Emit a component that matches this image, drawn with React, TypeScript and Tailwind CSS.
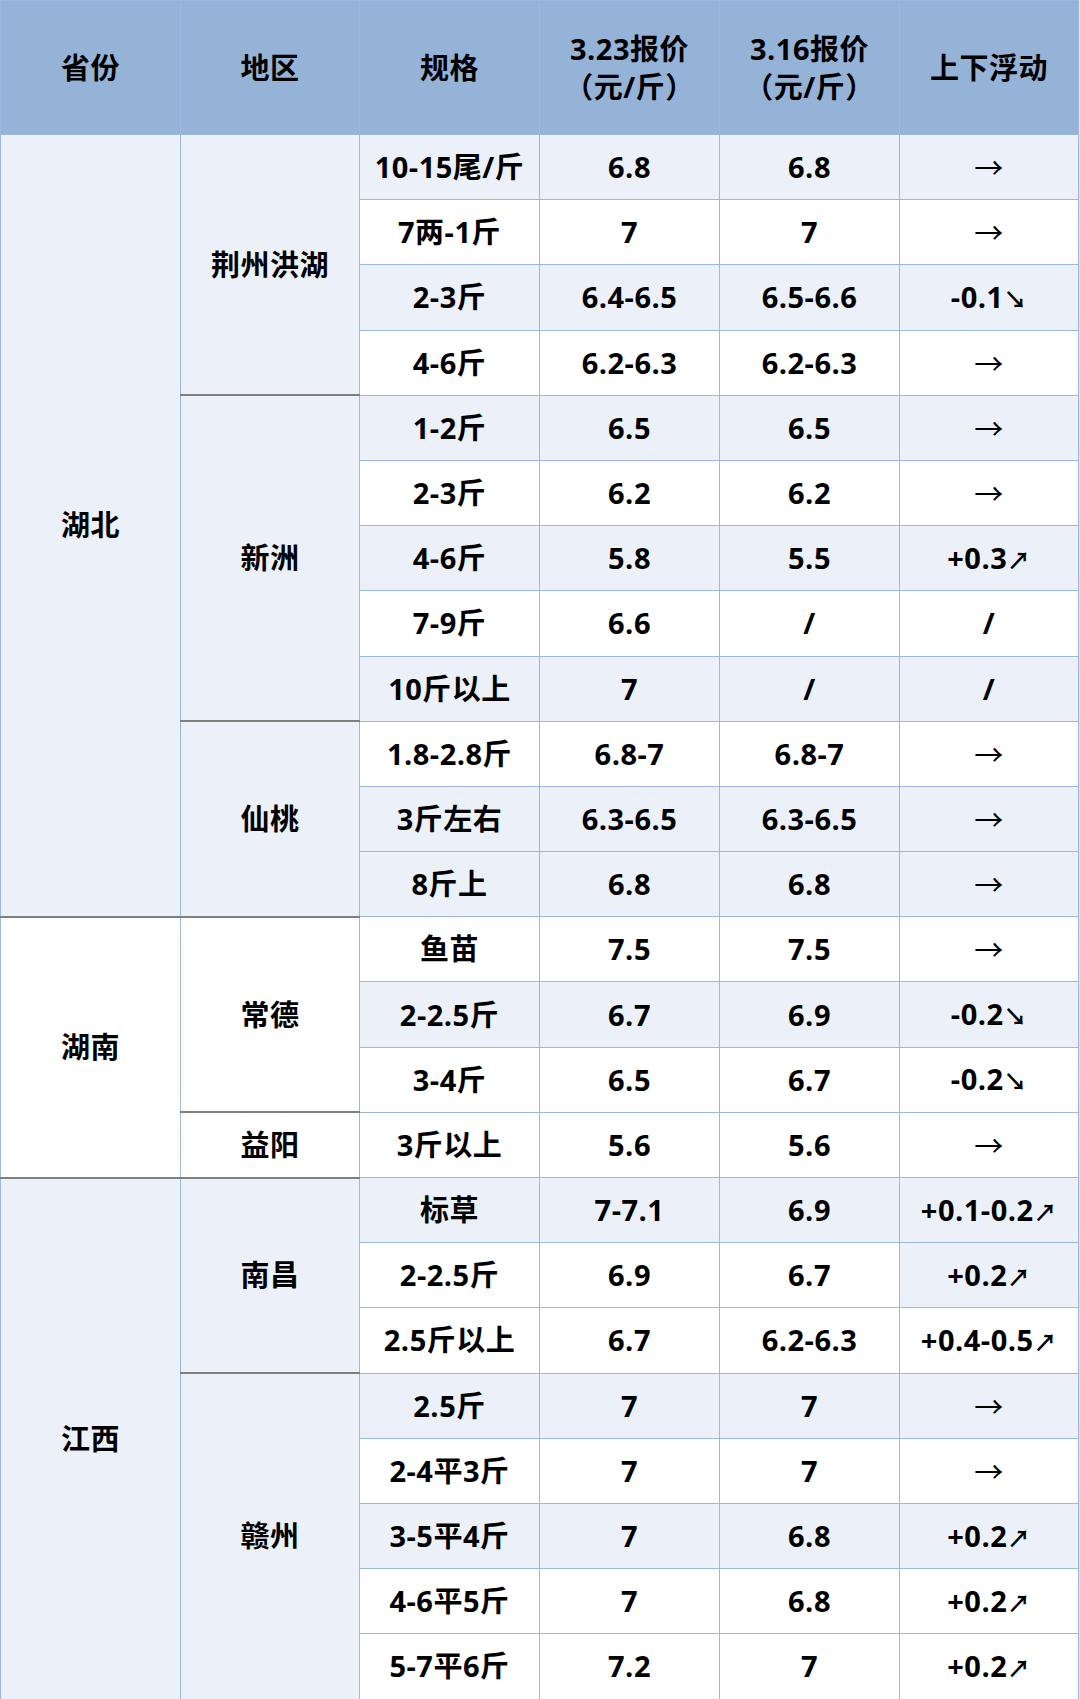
import React from 'react';

type Row = {
  spec: string;
  p1: string;
  p2: string;
  change: string;
  light: boolean;
  lightChange?: boolean;
};

type Region = { name: string; light: boolean; rows: Row[] };
type Province = { name: string; light: boolean; regions: Region[] };

const data: Province[] = [
  {
    name: '湖北',
    light: true,
    regions: [
      {
        name: '荆州洪湖',
        light: true,
        rows: [
          { spec: '10-15尾/斤', p1: '6.8', p2: '6.8', change: '→', light: true },
          { spec: '7两-1斤', p1: '7', p2: '7', change: '→', light: false },
          { spec: '2-3斤', p1: '6.4-6.5', p2: '6.5-6.6', change: '-0.1↘', light: true },
          { spec: '4-6斤', p1: '6.2-6.3', p2: '6.2-6.3', change: '→', light: false },
        ],
      },
      {
        name: '新洲',
        light: true,
        rows: [
          { spec: '1-2斤', p1: '6.5', p2: '6.5', change: '→', light: true },
          { spec: '2-3斤', p1: '6.2', p2: '6.2', change: '→', light: false },
          { spec: '4-6斤', p1: '5.8', p2: '5.5', change: '+0.3↗', light: true },
          { spec: '7-9斤', p1: '6.6', p2: '/', change: '/', light: false },
          { spec: '10斤以上', p1: '7', p2: '/', change: '/', light: true },
        ],
      },
      {
        name: '仙桃',
        light: true,
        rows: [
          { spec: '1.8-2.8斤', p1: '6.8-7', p2: '6.8-7', change: '→', light: false },
          { spec: '3斤左右', p1: '6.3-6.5', p2: '6.3-6.5', change: '→', light: true },
          { spec: '8斤上', p1: '6.8', p2: '6.8', change: '→', light: true },
        ],
      },
    ],
  },
  {
    name: '湖南',
    light: false,
    regions: [
      {
        name: '常德',
        light: false,
        rows: [
          { spec: '鱼苗', p1: '7.5', p2: '7.5', change: '→', light: false },
          { spec: '2-2.5斤', p1: '6.7', p2: '6.9', change: '-0.2↘', light: true },
          { spec: '3-4斤', p1: '6.5', p2: '6.7', change: '-0.2↘', light: false },
        ],
      },
      {
        name: '益阳',
        light: false,
        rows: [{ spec: '3斤以上', p1: '5.6', p2: '5.6', change: '→', light: false }],
      },
    ],
  },
  {
    name: '江西',
    light: true,
    regions: [
      {
        name: '南昌',
        light: true,
        rows: [
          { spec: '标草', p1: '7-7.1', p2: '6.9', change: '+0.1-0.2↗', light: true },
          { spec: '2-2.5斤', p1: '6.9', p2: '6.7', change: '+0.2↗', light: false, lightChange: true },
          { spec: '2.5斤以上', p1: '6.7', p2: '6.2-6.3', change: '+0.4-0.5↗', light: false },
        ],
      },
      {
        name: '赣州',
        light: true,
        rows: [
          { spec: '2.5斤', p1: '7', p2: '7', change: '→', light: true },
          { spec: '2-4平3斤', p1: '7', p2: '7', change: '→', light: false },
          { spec: '3-5平4斤', p1: '7', p2: '6.8', change: '+0.2↗', light: true },
          { spec: '4-6平5斤', p1: '7', p2: '6.8', change: '+0.2↗', light: false },
          { spec: '5-7平6斤', p1: '7.2', p2: '7', change: '+0.2↗', light: false },
        ],
      },
    ],
  },
];

const cell = 'border border-[#9cb8df] text-center align-middle';
const arrowFont = { fontFamily: '"Noto Sans CJK SC", sans-serif' };

function Change({ value }: { value: string }) {
  if (value === '→') {
    return (
      <span className="font-normal text-[29px]" style={arrowFont}>
        →
      </span>
    );
  }
  const last = value.slice(-1);
  if (last === '↗' || last === '↘') {
    return (
      <span className="whitespace-nowrap">
        {value.slice(0, -1)}
        <span className="text-[23px] font-bold" style={arrowFont}>
          {last}
        </span>
      </span>
    );
  }
  return <span>{value}</span>;
}

export default function App() {
  return (
    <div className="w-[1080px] h-[1699px] bg-[#e4e4e4] overflow-hidden">
      <table
        className="w-[1078px] table-fixed border-collapse text-black font-bold text-[29px] leading-[38px] tracking-[0.5px]"
        style={{ fontFamily: '"Open Sans", "Noto Sans CJK SC", sans-serif' }}
      >
        <colgroup>
          <col className="w-[180px]" />
          <col className="w-[179px]" />
          <col className="w-[180px]" />
          <col className="w-[180px]" />
          <col className="w-[180px]" />
          <col className="w-[179px]" />
        </colgroup>
        <thead>
          <tr className="h-[134px] bg-[#95b3d7]">
            <th className={`${cell} border-[#7a9fcf]`}>省份</th>
            <th className={`${cell} border-[#7a9fcf]`}>地区</th>
            <th className={`${cell} border-[#7a9fcf]`}>规格</th>
            <th className={`${cell} border-[#7a9fcf]`}>
              3.23报价
              <br />
              （元/斤）
            </th>
            <th className={`${cell} border-[#7a9fcf]`}>
              3.16报价
              <br />
              （元/斤）
            </th>
            <th className={`${cell} border-[#7a9fcf]`}>上下浮动</th>
          </tr>
        </thead>
        <tbody>
          {data.map((prov, pi) => {
            const provCount = prov.regions.reduce((n, r) => n + r.rows.length, 0);
            return prov.regions.map((reg, ri) =>
              reg.rows.map((row, i) => {
                const rowBg = row.light ? 'bg-[#ecf1f9]' : 'bg-white';
                const changeBg = row.lightChange || row.light ? 'bg-[#ecf1f9]' : 'bg-white';
                return (
                  <tr key={`${pi}-${ri}-${i}`} className="h-[65.2px]">
                    {ri === 0 && i === 0 && (
                      <td
                        rowSpan={provCount}
                        className={`${cell} ${prov.light ? 'bg-[#ecf1f9]' : 'bg-white'} ${pi > 0 ? 'border-t-2 border-t-[#7f7f7f]' : ''}`}
                      >
                        {prov.name}
                      </td>
                    )}
                    {i === 0 && (
                      <td
                        rowSpan={reg.rows.length}
                        className={`${cell} ${reg.light ? 'bg-[#ecf1f9]' : 'bg-white'} ${pi > 0 || ri > 0 ? 'border-t-2 border-t-[#7f7f7f]' : ''}`}
                      >
                        {reg.name}
                      </td>
                    )}
                    <td className={`${cell} ${rowBg}`}>{row.spec}</td>
                    <td className={`${cell} ${rowBg}`}>{row.p1}</td>
                    <td className={`${cell} ${rowBg}`}>{row.p2}</td>
                    <td className={`${cell} ${changeBg}`}>
                      <Change value={row.change} />
                    </td>
                  </tr>
                );
              })
            );
          })}
        </tbody>
      </table>
    </div>
  );
}
